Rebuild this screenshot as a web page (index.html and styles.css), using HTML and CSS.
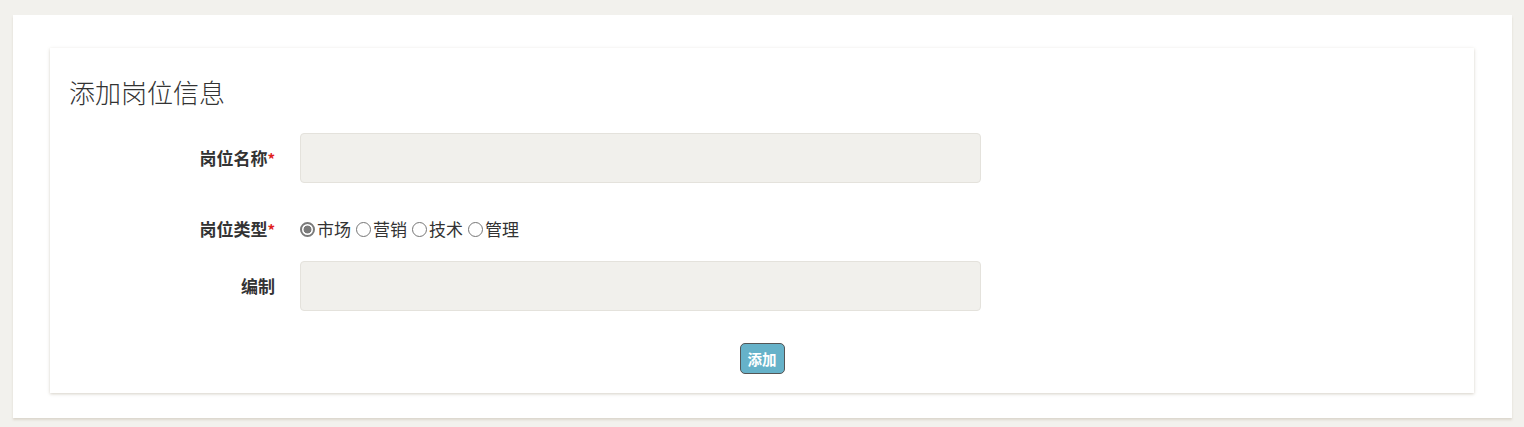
FILE: index.html
```html
<!DOCTYPE html>
<html lang="zh-CN">
<head>
<meta charset="utf-8">
<title>添加岗位信息</title>
<link rel="stylesheet" href="styles.css">
</head>
<body>
<div class="panel">
  <div class="card">
    <h2 class="title">添加岗位信息</h2>
    <form class="form">
      <div class="row row-input">
        <label class="label">岗位名称<span class="req">*</span></label>
        <input class="field" type="text">
      </div>
      <div class="row row-radio">
        <label class="label">岗位类型<span class="req">*</span></label>
        <div class="options">
          <label class="opt"><input class="radio" type="radio" name="type" checked>市场</label>
          <label class="opt"><input class="radio" type="radio" name="type">营销</label>
          <label class="opt"><input class="radio" type="radio" name="type">技术</label>
          <label class="opt"><input class="radio" type="radio" name="type">管理</label>
        </div>
      </div>
      <div class="row row-input row-last">
        <label class="label">编制</label>
        <input class="field" type="text">
      </div>
      <div class="actions">
        <button class="btn" type="button">添加</button>
      </div>
    </form>
  </div>
</div>
</body>
</html>
```
FILE: styles.css
```css
html, body {
  margin: 0;
  padding: 0;
}
body {
  background: #f2f1ed;
  font-family: "Noto Sans CJK SC", "Microsoft YaHei", sans-serif;
  color: #333;
  padding: 15px 12px 10px 13px;
}
.panel {
  background: #fff;
  padding: 33px 38px 25px 37px;
  box-shadow: 0 2px 2px rgba(180, 170, 150, 0.35);
}
.card {
  background: #fff;
  padding: 26px 19px 19px 19px;
  box-shadow: 0 1px 3px rgba(160, 150, 130, 0.45);
}
.title {
  margin: 0 0 23px 0;
  font-size: 26px;
  line-height: 36px;
  font-weight: 300;
  color: #333;
}
.form {
  display: flex;
  flex-direction: column;
}
.row {
  display: grid;
  grid-template-columns: 206px 681px;
  column-gap: 25px;
  align-items: center;
}
.row-radio {
  height: 26px;
  margin: 33px 0 19px 0;
}
.label {
  text-align: right;
  font-size: 17px;
  font-weight: 700;
  color: #333;
  line-height: 24px;
}
.req {
  color: #e0201c;
  font-size: 15px;
}
.field {
  box-sizing: border-box;
  height: 50px;
  width: 681px;
  margin: 0;
  background: #f1f0ec;
  border: 1px solid #e4e2dc;
  border-radius: 4px;
  font-size: 16px;
  padding: 0 12px;
  outline: none;
}
.options {
  display: flex;
  align-items: center;
}
.opt {
  display: inline-flex;
  align-items: center;
  margin-right: 5px;
  font-size: 17px;
  line-height: 24px;
  color: #333;
}
.radio {
  appearance: none;
  -webkit-appearance: none;
  box-sizing: border-box;
  width: 15px;
  height: 15px;
  margin: 0 2px 0 0;
  border: 1px solid #767676;
  border-radius: 50%;
  background: #fff;
}
.radio:checked {
  border: 2px solid #7a7a7a;
  background: radial-gradient(circle, #7a7a7a 0 3.6px, #fff 4.3px);
}
.actions {
  display: flex;
  justify-content: center;
  margin-top: 32px;
}
.btn {
  box-sizing: border-box;
  width: 45px;
  height: 31px;
  padding: 0;
  background: #66b2c9;
  border: 1px solid #555;
  border-radius: 5px;
  color: #fff;
  font-family: "Noto Sans CJK SC", "Microsoft YaHei", sans-serif;
  font-size: 14.5px;
  font-weight: 700;
}
```
